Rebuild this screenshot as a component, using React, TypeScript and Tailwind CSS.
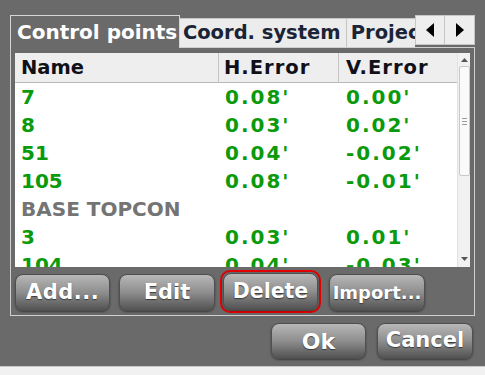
import type { ReactNode } from "react";
import clsx from "clsx";

const FONT = { fontFamily: '"DejaVu Sans", Verdana, sans-serif' };

type Row = { name: string; h?: string; v?: string; muted?: boolean };

const ROWS: Row[] = [
  { name: "7", h: "0.08'", v: "0.00'" },
  { name: "8", h: "0.03'", v: "0.02'" },
  { name: "51", h: "0.04'", v: "-0.02'" },
  { name: "105", h: "0.08'", v: "-0.01'" },
  { name: "BASE TOPCON", muted: true },
  { name: "3", h: "0.03'", v: "0.01'" },
  { name: "104", h: "0.04'", v: "-0.03'" },
];

function GlossButton({ children, className }: { children: ReactNode; className?: string }) {
  return (
    <div
      className={clsx(
        "flex items-center justify-center rounded-[8px] border border-[#4f4f4f] bg-linear-to-b from-[#b8b8b8] via-[#8e8e8e] to-[#535353] font-bold text-white shadow-[0_1px_2px_rgba(0,0,0,0.45)] [text-shadow:0_1px_1px_#3a3a3a]",
        className,
      )}
    >
      {children}
    </div>
  );
}

function Arrow({ dir }: { dir: "left" | "right" }) {
  return (
    <svg width="8" height="14" viewBox="0 0 8 14">
      {dir === "left" ? <path d="M8 0 L0 7 L8 14 Z" fill="#000" /> : <path d="M0 0 L8 7 L0 14 Z" fill="#000" />}
    </svg>
  );
}

function ScrollBar() {
  return (
    <div className="flex w-[13px] flex-col items-center border-l border-[#e2e2e2] bg-[#f1f1f1]">
      <svg className="mt-[5px]" width="7" height="4" viewBox="0 0 7 4">
        <path d="M3.5 0 L7 4 L0 4 Z" fill="#555" />
      </svg>
      {/* thumb */}
      <div className="mt-[4px] flex h-[110px] w-[11px] flex-col items-center justify-center gap-[2px] rounded-[2px] border border-[#c9c9c9] bg-[#fafafa]">
        <div className="h-px w-[5px] bg-[#9a9a9a]" />
        <div className="h-px w-[5px] bg-[#9a9a9a]" />
        <div className="h-px w-[5px] bg-[#9a9a9a]" />
      </div>
      <div className="flex-1" />
      <svg className="mb-[6px]" width="7" height="4" viewBox="0 0 7 4">
        <path d="M0 0 L7 0 L3.5 4 Z" fill="#555" />
      </svg>
    </div>
  );
}

function PointsList() {
  return (
    <div className="flex h-[214px] overflow-hidden bg-white">
      <div className="flex min-w-0 flex-1 flex-col">
        <div className="flex h-[30px] shrink-0 items-center border-b border-[#b9b9b9] bg-[#eeeeee] text-[19.5px] font-bold text-[#101018]">
          <div className="flex h-full w-[204px] items-center border-r border-[#c4c4c4] pl-[6px]">Name</div>
          <div className="flex h-full w-[120px] items-center border-r border-[#c4c4c4] pl-[5px] tracking-[1px]">H.Error</div>
          <div className="flex h-full flex-1 items-center pl-[7px] tracking-[1px]">V.Error</div>
        </div>
        {ROWS.map((r) => (
          <div
            key={r.name}
            className={clsx(
              "flex h-[28px] shrink-0 items-center text-[20px] font-bold",
              r.muted ? "text-[#747474]" : "text-[#0b9a0b]",
            )}
          >
            <div className="w-[204px] pl-[6px] whitespace-nowrap">{r.name}</div>
            <div className="w-[120px] pl-[6px] tracking-[2px]">{r.h}</div>
            <div className="flex-1 pl-[7px] tracking-[2px]">{r.v}</div>
          </div>
        ))}
      </div>
      <ScrollBar />
    </div>
  );
}

export default function App() {
  return (
    <div className="flex h-[375px] w-[485px] flex-col bg-[#f1f1f1]" style={FONT}>
      <div className="flex h-[367px] flex-col border-b border-[#c8c8c8] bg-[#6a6a6a] px-[10px] pt-[14px]">
        {/* tab bar */}
        <div className="flex h-[33px] items-end">
          <div className="relative z-10 -mb-px flex h-[33px] w-[171px] items-center border border-b-0 border-[#d6d6d6] bg-[#6a6a6a] pl-[6px] text-[20px] font-bold whitespace-nowrap text-white">
            Control points
          </div>
          <div className="flex h-[29px] w-[168px] items-center border border-b-0 border-l-0 border-[#c6c6c6] bg-[#ececec] pl-[3px] text-[19.5px] font-bold whitespace-nowrap text-[#1b2436]">
            Coord. system
          </div>
          <div className="flex h-[29px] w-[69px] items-center overflow-hidden border-t border-[#c6c6c6] bg-[#ececec] pl-[4px] text-[19.5px] font-bold whitespace-nowrap text-[#1b2436]">
            Projection
          </div>
          <div className="mb-[2px] flex h-[30px] w-[30px] items-center justify-center border border-[#c6c6c6] bg-[#eeeeee]">
            <Arrow dir="left" />
          </div>
          <div className="mb-[2px] flex h-[30px] w-[30px] items-center justify-center border border-l-0 border-[#c6c6c6] bg-[#eeeeee]">
            <Arrow dir="right" />
          </div>
        </div>

        {/* tab page */}
        <div className="flex h-[269px] flex-col border border-[#cfcfcf] px-[4px] pt-[5px]">
          <PointsList />
          <div className="mt-[3px] flex items-start">
            <GlossButton className="mt-[4px] h-[37px] w-[95px] text-[21px] tracking-[0.5px]">Add...</GlossButton>
            <GlossButton className="mt-[4px] ml-[9px] h-[37px] w-[96px] text-[21px]">Edit</GlossButton>
            <div className="ml-[5px] rounded-[10px] border-2 border-[#e00000] p-px">
              <GlossButton className="h-[37px] w-[95px] text-[20.5px]">Delete</GlossButton>
            </div>
            <GlossButton className="mt-[4px] ml-[8px] h-[37px] w-[96px] text-[18px]">Import...</GlossButton>
          </div>
        </div>

        {/* dialog buttons */}
        <div className="mt-[7px] flex justify-end gap-[11px] pr-[2px]">
          <GlossButton className="h-[36px] w-[95px] text-[22px]">Ok</GlossButton>
          <GlossButton className="h-[36px] w-[96px] text-[21px]">Cancel</GlossButton>
        </div>
      </div>
    </div>
  );
}
